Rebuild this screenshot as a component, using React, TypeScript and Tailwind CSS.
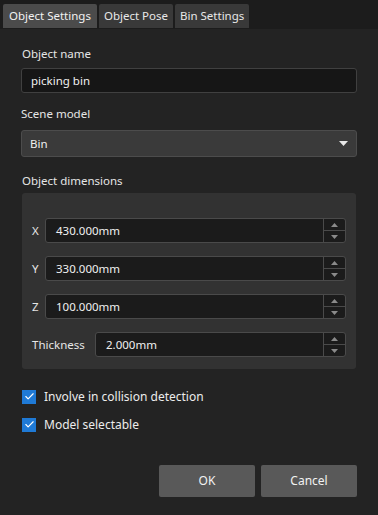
import { Check } from "lucide-react";

const font = { fontFamily: '"Noto Sans", "Open Sans", sans-serif' };

const tabs = ["Object Settings", "Object Pose", "Bin Settings"];

const Spinner = () => (
  <div className="flex flex-col w-[22px] border-l border-[#4a4a4a] h-full">
    <div className="flex-1 flex items-center justify-center border-b border-[#4a4a4a]">
      <svg width="7" height="4" viewBox="0 0 7 4">
        <path d="M0 4 L3.5 0 L7 4 Z" fill="#8a8a8a" />
      </svg>
    </div>
    <div className="flex-1 flex items-center justify-center">
      <svg width="7" height="4" viewBox="0 0 7 4">
        <path d="M0 0 L3.5 4 L7 0 Z" fill="#8a8a8a" />
      </svg>
    </div>
  </div>
);

const NumberField = ({ label, value, wide }: { label: string; value: string; wide?: boolean }) => (
  <div className="flex items-center h-[25px]">
    <span className={wide ? "w-[72px] pl-[9px] text-[#e6e6e6]" : "w-[22px] pl-[9px] text-[#e6e6e6]"}>{label}</span>
    <div className="flex-1 flex items-center h-full bg-[#1b1b1b] border border-[#4a4a4a] rounded-[3px]">
      <span className="flex-1 pl-[10px] text-[#f0f0f0]">{value}</span>
      <Spinner />
    </div>
  </div>
);

const CheckRow = ({ label }: { label: string }) => (
  <div className="flex items-center gap-[8px] h-[17px]">
    <div className="w-[14px] h-[14px] bg-[#1f7ad6] flex items-center justify-center">
      <Check size={11} strokeWidth={2.5} color="#ffffff" />
    </div>
    <span className="text-[#ececec] text-[12px]">{label}</span>
  </div>
);

export default function App() {
  return (
    <div className="w-[378px] h-[515px] bg-[#232323] flex flex-col text-[11.5px]" style={font}>
      <div className="flex gap-[2px] pl-[3px] pt-[4px] bg-[#1c1c1c] h-[29px]">
        {tabs.map((t, i) => (
          <div
            key={t}
            className={
              i === 0
                ? "px-[6px] h-[24px] flex items-center bg-[#4b4b4b] text-[#f2f2f2] rounded-t-[2px]"
                : "px-[5px] h-[24px] flex items-center bg-[#393939] text-[#e8e8e8] rounded-t-[2px]"
            }
          >
            {t}
          </div>
        ))}
      </div>

      <div className="flex flex-col px-[21px] pt-[16px]">
        <span className="text-[#e6e6e6] h-[17px] leading-[17px] ml-[1px]">Object name</span>
        <div className="mt-[6px] h-[25px] bg-[#161616] border border-[#404040] rounded-[3px] flex items-center pl-[9px] text-[#f0f0f0]">
          picking bin
        </div>

        <span className="mt-[12px] text-[#e6e6e6] h-[17px] leading-[17px]">Scene model</span>
        <div className="mt-[8px] h-[27px] bg-[#3a3a3a] border border-[#4c4c4c] rounded-[3px] flex items-center justify-between pl-[8px] pr-[8px] text-[#f0f0f0]">
          <span>Bin</span>
          <svg width="9" height="5" viewBox="0 0 9 5">
            <path d="M0 0 L4.5 5 L9 0 Z" fill="#e8e8e8" />
          </svg>
        </div>

        <span className="mt-[15px] ml-[1px] text-[#e6e6e6] h-[17px] leading-[17px]">Object dimensions</span>
        <div className="mt-[4px] mx-[1px] bg-[#323232] rounded-[3px] pt-[25px] pb-[12px] pl-[1px] pr-[10px] flex flex-col gap-[13px]">
          <NumberField label="X" value="430.000mm" />
          <NumberField label="Y" value="330.000mm" />
          <NumberField label="Z" value="100.000mm" />
          <NumberField label="Thickness" value="2.000mm" wide />
        </div>

        <div className="mt-[19px] flex flex-col gap-[11px] pl-[1px]">
          <CheckRow label="Involve in collision detection" />
          <CheckRow label="Model selectable" />
        </div>

        <div className="mt-[32px] flex justify-end gap-[6px]">
          <button className="w-[96px] h-[32px] bg-[#595959] text-[#f2f2f2] text-[12px] rounded-[2px]">OK</button>
          <button className="w-[96px] h-[32px] bg-[#595959] text-[#f2f2f2] text-[12px] rounded-[2px]">Cancel</button>
        </div>
      </div>
    </div>
  );
}
